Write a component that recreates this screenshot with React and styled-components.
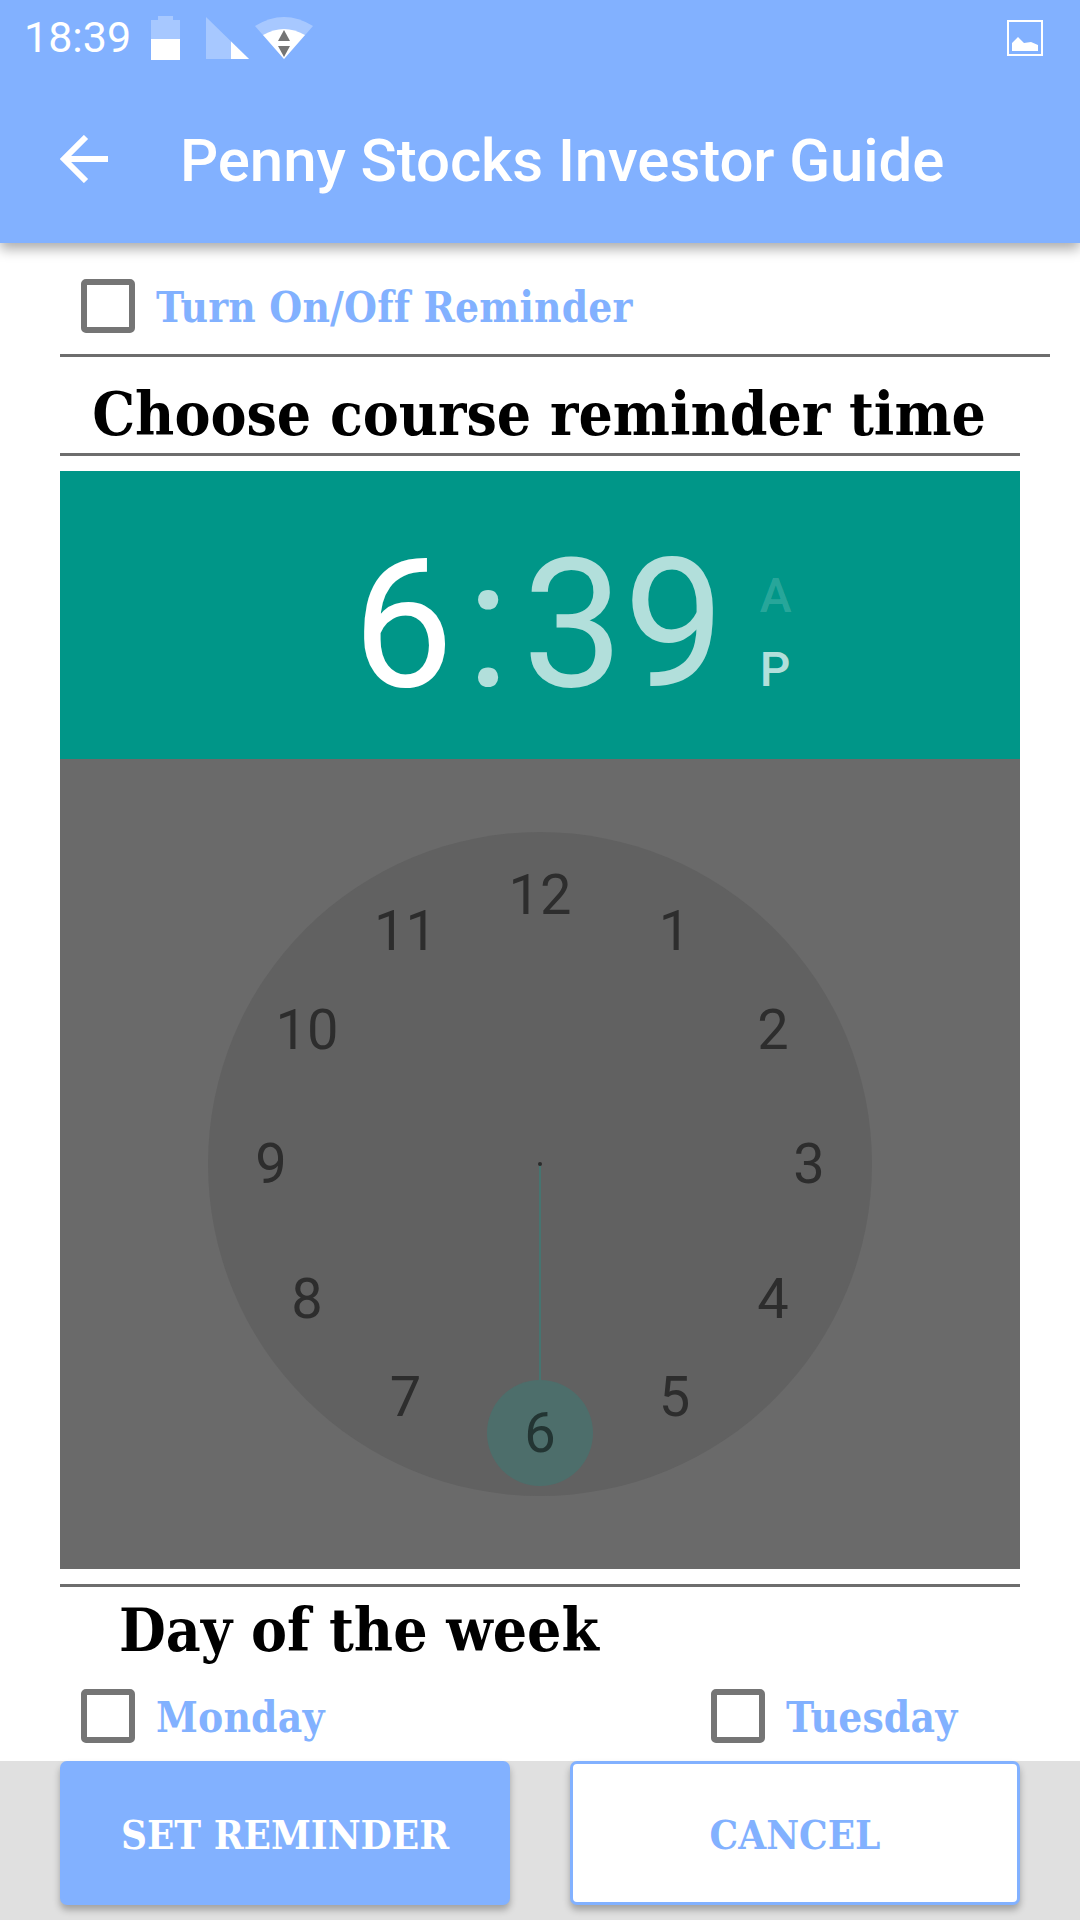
import React from 'react'
import styled, { createGlobalStyle } from 'styled-components'

const BLUE = '#82b1ff'
const SERIF = '"DejaVu Serif Condensed", "DejaVu Serif", serif'

const GlobalStyle = createGlobalStyle`
  html, body { margin: 0; padding: 0; background: #fff; }
  * { box-sizing: border-box; }
`

const Page = styled.div`
  width: 1080px;
  height: 1920px;
  display: flex;
  flex-direction: column;
  overflow: hidden;
  font-family: Roboto, sans-serif;
`
const AppBar = styled.header`
  position: relative;
  z-index: 2;
  height: 243px;
  background: ${BLUE};
  box-shadow: 0 6px 12px rgba(0, 0, 0, 0.33);
  color: #fff;
`
const StatusBar = styled.div`
  height: 75px;
  padding: 0 37px 0 24px;
  display: flex;
  align-items: center;
`
const Clock = styled.span`
  font-size: 43px;
  line-height: 75px;
  margin-right: 20px;
`
const StatusIcon = styled.svg`
  display: block;
  margin-right: ${p => p.$gap || 0}px;
`
const Spacer = styled.div`
  flex: 1;
`
const TitleRow = styled.div`
  height: 168px;
  display: flex;
  align-items: center;
  padding: 4px 0 0 60px;
`
const BackIcon = styled.svg`
  display: block;
  margin: -4px 72px 0 0;
`
const Title = styled.h1`
  margin: 0;
  font-size: 60px;
  font-weight: 500;
  letter-spacing: -0.1px;
  line-height: 70px;
`
const Content = styled.main`
  flex: 1;
  padding: 36px 0 0 60px;
  overflow: hidden;
`
const CheckRow = styled.label`
  display: flex;
  align-items: center;
  height: 54px;
  padding-left: 21px;
  width: ${p => p.$width || 'auto'};
`
const Box = styled.span`
  width: 54px;
  height: 54px;
  border: 6px solid #757575;
  border-radius: 5px;
  margin-right: 21px;
  flex: none;
`
const CheckText = styled.span`
  padding-top: 2px;
  font-family: ${SERIF};
  font-size: 42px;
  font-weight: 700;
  letter-spacing: 0.2px;
  color: ${BLUE};
`
const Divider = styled.hr`
  margin: ${p => p.$top || 0}px 0 0;
  border: 0;
  height: 3px;
  background: #6d6d6d;
  width: ${p => p.$width}px;
`
const SectionTitle = styled.h2`
  margin: 0;
  width: 958px;
  height: 96px;
  line-height: 114px;
  font-family: ${SERIF};
  font-size: 60px;
  font-weight: 700;
  color: #000;
  text-align: center;
  white-space: nowrap;
`
const TimeHeader = styled.div`
  width: 960px;
  height: 288px;
  margin-top: 15px;
  background: #009688;
  display: flex;
  justify-content: center;
  align-items: flex-start;
  padding: 64px 0 0 64px;
`
const TimeDigits = styled.div`
  font-size: 180px;
  line-height: 180px;
  color: ${p => (p.$active ? '#fff' : '#b2dfdb')};
`
const TimeColon = styled(TimeDigits)`
  margin: 0 12.5px;
`
const Meridiem = styled.div`
  display: flex;
  flex-direction: column;
  margin: 32px 0 0 35px;
  gap: 16px;
`
const MeridiemItem = styled.span`
  font-size: 48px;
  line-height: 58px;
  font-weight: 500;
  color: ${p => (p.$active ? '#b2dfdb' : 'rgba(255,255,255,0.18)')};
`
const ClockPanel = styled.div`
  width: 960px;
  height: 810px;
  background: #6a6a6a;
  display: flex;
  align-items: center;
  justify-content: center;
`
const Dial = styled.div`
  position: relative;
  width: 664px;
  height: 664px;
  border-radius: 50%;
  background: #616161;
`
const Hand = styled.div`
  position: absolute;
  left: 331px;
  top: 332px;
  width: 2px;
  height: 218px;
  background: #467470;
`
const Pivot = styled.div`
  position: absolute;
  left: 330px;
  top: 330px;
  width: 4px;
  height: 4px;
  border-radius: 50%;
  background: #2b2b2b;
`
const Selector = styled.div`
  position: absolute;
  left: 279px;
  top: 548px;
  width: 106px;
  height: 106px;
  border-radius: 50%;
  background: #4d6e6b;
`
const Hour = styled.span`
  position: absolute;
  width: 100px;
  height: 70px;
  margin: -35px 0 0 -50px;
  text-align: center;
  font-size: 56px;
  line-height: 70px;
  color: ${p => (p.$selected ? '#233533' : '#2d2d2d')};
`
const DayTitle = styled.h2`
  margin: 0;
  padding-left: 59px;
  height: 102px;
  line-height: 86px;
  font-family: ${SERIF};
  font-size: 60px;
  font-weight: 700;
  color: #000;
  white-space: nowrap;
`
const DayGrid = styled.div`
  display: flex;
`
const Footer = styled.footer`
  height: 159px;
  flex: none;
  background: #e0e0e0;
  display: flex;
  padding: 0 60px 15px;
  justify-content: space-between;
`
const Button = styled.button`
  width: 450px;
  height: 144px;
  border-radius: 7px;
  border: 3px solid ${BLUE};
  background: ${p => (p.$primary ? BLUE : '#fff')};
  color: ${p => (p.$primary ? '#fff' : BLUE)};
  font-family: ${SERIF};
  font-size: 40px;
  font-weight: 700;
  text-transform: uppercase;
  box-shadow: 0 5px 7px rgba(0, 0, 0, 0.28);
  padding: 2px 0 0;
`

const hours = [12, 1, 2, 3, 4, 5, 6, 7, 8, 9, 10, 11]

const hourPos = i => {
  const a = (i * Math.PI) / 6
  return {
    left: 332 + 269 * Math.sin(a),
    top: 332 - 269 * Math.cos(a),
  }
}

const StatusIcons = () => (
  <>
    <StatusIcon $gap={26} width="29" height="44" viewBox="0 0 29 44">
      <path d="M7 0h15v4h7v19H0V4h7z" fill="#fff" opacity="0.3" />
      <rect y="23" width="29" height="21" fill="#fff" />
    </StatusIcon>
    <StatusIcon $gap={6} width="43" height="42" viewBox="0 0 43 42">
      <path d="M0 0L43 42H0z" fill="#fff" opacity="0.3" />
      <path d="M25 24.4L43 42H25z" fill="#fff" />
    </StatusIcon>
    <StatusIcon width="58" height="42" viewBox="0 0 58 42">
      <path d="M0 9Q29 -9 58 9L29 42z" fill="#fff" opacity="0.3" />
      <path d="M8 18Q29 6 50 18L29 42z" fill="#fff" />
      <path d="M23 24L29 13L35 24z" fill="#757575" />
      <path d="M23 29H35L29 40z" fill="#757575" />
    </StatusIcon>
  </>
)

const App = () => {
  return (
    <Page>
      <GlobalStyle />
      <AppBar>
        <StatusBar>
          <Clock>18:39</Clock>
          <StatusIcons />
          <Spacer />
          <StatusIcon width="36" height="36" viewBox="0 0 36 36">
            <rect x="1" y="1" width="34" height="34" fill="none" stroke="#fff" strokeWidth="2" />
            <path d="M5 31V23L11 17L17 23L24 22L31 25V31z" fill="#fff" />
          </StatusIcon>
        </StatusBar>
        <TitleRow>
          <BackIcon width="48" height="48" viewBox="0 0 48 48">
            <path d="M48 24H5M26 2L4 24L26 46" fill="none" stroke="#fff" strokeWidth="6" />
          </BackIcon>
          <Title>Penny Stocks Investor Guide</Title>
        </TitleRow>
      </AppBar>

      <Content>
        <CheckRow>
          <Box />
          <CheckText>Turn On/Off Reminder</CheckText>
        </CheckRow>
        <Divider $width={990} $top={21} />
        <SectionTitle>Choose course reminder time</SectionTitle>
        <Divider $width={960} />

        <TimeHeader>
          <TimeDigits $active>6</TimeDigits>
          <TimeColon>:</TimeColon>
          <TimeDigits>39</TimeDigits>
          <Meridiem>
            <MeridiemItem>A</MeridiemItem>
            <MeridiemItem $active>P</MeridiemItem>
          </Meridiem>
        </TimeHeader>
        <ClockPanel>
          <Dial>
            <Hand />
            <Pivot />
            <Selector />
            {hours.map((h, i) => (
              <Hour key={h} $selected={h === 6} style={hourPos(i)}>{h}</Hour>
            ))}
          </Dial>
        </ClockPanel>

        <Divider $width={960} $top={15} />
        <DayTitle>Day of the week</DayTitle>
        <DayGrid>
          <CheckRow $width="630px">
            <Box />
            <CheckText>Monday</CheckText>
          </CheckRow>
          <CheckRow>
            <Box />
            <CheckText>Tuesday</CheckText>
          </CheckRow>
        </DayGrid>
      </Content>

      <Footer>
        <Button $primary>Set Reminder</Button>
        <Button>Cancel</Button>
      </Footer>
    </Page>
  )
}

export default App
